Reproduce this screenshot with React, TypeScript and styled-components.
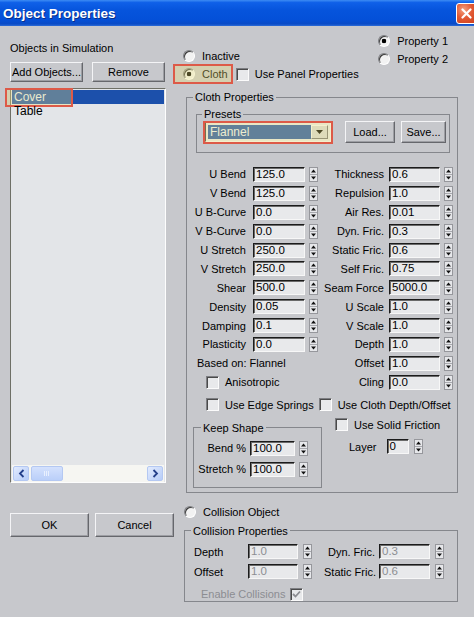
import React from 'react';
import styled, { createGlobalStyle } from 'styled-components';

const FONT = '"Liberation Sans", Arial, sans-serif';
const FACE = '#c7c8cc';

const GlobalStyle = createGlobalStyle`
  * { box-sizing: border-box; }
  html, body { margin: 0; padding: 0; background: ${FACE}; }
  body { font-family: ${FONT}; font-size: 11px; color: #000; }
`;

const Window = styled.div`
  width: 474px;
  height: 617px;
  overflow: hidden;
  display: flex;
  flex-direction: column;
  background: ${FACE};
`;

const TitleBar = styled.div`
  height: 26px;
  flex-shrink: 0;
  display: flex;
  align-items: center;
  justify-content: space-between;
  padding-left: 3px;
  background: linear-gradient(
    to bottom,
    #3d8cf4 0%,
    #0f60e8 10%,
    #0654dc 40%,
    #0450d8 75%,
    #0a4bc6 92%,
    #2c6cd8 100%
  );
  color: #fff;
  font-size: 13.5px;
  font-weight: bold;
  text-shadow: 1px 1px 0 #0b2f8a;
`;

const CloseButton = styled.div`
  width: 21px;
  height: 21px;
  margin-right: -3px;
  border: 1px solid #fff;
  border-radius: 3px;
  background: radial-gradient(circle at 35% 30%, #f4a080 0%, #e35a34 45%, #cc3e1c 100%);
  display: flex;
  align-items: center;
  justify-content: center;
`;

const Body = styled.div`
  flex: 1;
  display: flex;
  gap: 9px;
  padding-left: 10px;
`;

const LeftColumn = styled.div`
  width: 164px;
  display: flex;
  flex-direction: column;
  padding-top: 16px;
`;

const Caption = styled.div`
  height: 13px;
  line-height: 13px;
  white-space: nowrap;
`;

const ButtonRow = styled.div<{ $top: number; $gap: number }>`
  display: flex;
  gap: ${(p) => p.$gap}px;
  margin-top: ${(p) => p.$top}px;
`;

const PushButton = styled.div<{ $w: number; $h: number }>`
  width: ${(p) => p.$w}px;
  height: ${(p) => p.$h}px;
  flex-shrink: 0;
  display: flex;
  align-items: center;
  justify-content: center;
  border: 1px solid;
  border-color: #f4f4f6 #66676c #66676c #f4f4f6;
  box-shadow: inset -1px -1px 0 #9d9ea3;
  background: ${FACE};
  white-space: nowrap;
`;

const ListBox = styled.div`
  margin-top: 6px;
  width: 156px;
  height: 395px;
  display: flex;
  flex-direction: column;
  border: 1px solid;
  border-color: #6e6f66 #fdfdfd #fdfdfd #6e6f66;
  background: #e3e5e8;
  padding: 1px 1px 0 1px;
`;

const ListItem = styled.div<{ $selected?: boolean }>`
  position: relative;
  height: 14px;
  line-height: 14px;
  padding-left: 2px;
  font-size: 12px;
  background: ${(p) => (p.$selected ? '#1c50ab' : 'transparent')};
  color: ${(p) => (p.$selected ? '#e8eef8' : '#000')};
`;

const Annotation = styled.span<{ $l: number; $t: number; $r: number; $b: number }>`
  position: absolute;
  left: ${(p) => p.$l}px;
  top: ${(p) => p.$t}px;
  right: ${(p) => p.$r}px;
  bottom: ${(p) => p.$b}px;
  border: 2px solid #dd5a48;
  background: rgba(238, 226, 118, 0.32);
  pointer-events: none;
`;

const HScroll = styled.div`
  margin-top: auto;
  height: 17px;
  display: flex;
  align-items: center;
  padding: 0 1px;
  background: #f6f6f2;
`;

const ScrollArrow = styled.div`
  width: 16px;
  height: 15px;
  border: 1px solid #b4c8f2;
  border-radius: 2px;
  background: linear-gradient(to bottom right, #e2ebfe, #b6ccf8);
  display: flex;
  align-items: center;
  justify-content: center;
`;

const ScrollThumb = styled.div`
  width: 32px;
  height: 15px;
  margin: 0 auto 0 2px;
  border: 1px solid #b4c8f2;
  border-radius: 2px;
  background: linear-gradient(to bottom, #d4e1fd, #bacff9);
  display: flex;
  align-items: center;
  justify-content: center;
`;

const RightColumn = styled.div`
  width: 275px;
  display: flex;
  flex-direction: column;
`;

const ModeArea = styled.div`
  height: 64px;
  flex-shrink: 0;
  display: flex;
  justify-content: space-between;
`;

const ModeStack = styled.div<{ $top: number; $right?: number }>`
  display: flex;
  flex-direction: column;
  padding-top: ${(p) => p.$top}px;
  margin-right: ${(p) => p.$right ?? 0}px;
`;

const OptionRow = styled.div<{ $h?: number; $left?: number; $top?: number }>`
  height: ${(p) => p.$h ?? 18}px;
  margin-left: ${(p) => p.$left ?? 0}px;
  margin-top: ${(p) => p.$top ?? 0}px;
  display: flex;
  align-items: center;
  gap: 7px;
  white-space: nowrap;
`;

const Highlight = styled.div`
  position: relative;
  height: 18px;
  display: flex;
  align-items: center;
  gap: 7px;
`;

const Radio = styled.span<{ $checked?: boolean }>`
  width: 12px;
  height: 12px;
  flex-shrink: 0;
  border-radius: 50%;
  border: 1px solid;
  border-color: #7d7e82 #ffffff #ffffff #7d7e82;
  box-shadow: inset 1px 1px 0 #3a3a3a;
  background: ${(p) =>
    p.$checked ? 'radial-gradient(circle, #000 0 2px, #f2f2f2 2.6px)' : '#f2f2f2'};
`;

const CheckBox = styled.span<{ $gapLeft?: number; $gapRight?: number }>`
  width: 13px;
  height: 13px;
  flex-shrink: 0;
  margin-left: ${(p) => p.$gapLeft ?? 0}px;
  margin-right: ${(p) => p.$gapRight ?? 0}px;
  border: 1px solid;
  border-color: #7d7e82 #fbfbfb #fbfbfb #7d7e82;
  box-shadow: inset 1px 1px 0 #4a4a4a;
  background: #e8e9eb;
  display: flex;
  align-items: center;
  justify-content: center;
`;

const CheckLine = styled.div<{ $left?: number; $h?: number; $disabled?: boolean }>`
  height: ${(p) => p.$h ?? 18}px;
  margin-left: ${(p) => p.$left ?? 0}px;
  display: flex;
  align-items: center;
  white-space: nowrap;
  color: ${(p) => (p.$disabled ? '#8c8d92' : '#000')};
  & > ${CheckBox} + span {
    margin-left: 6px;
  }
`;

const Group = styled.fieldset<{ $l?: number; $t?: number; $pl: number; $pr?: number; $pt?: number; $pb?: number; $w?: number }>`
  margin: ${(p) => p.$t ?? 0}px 0 0 ${(p) => p.$l ?? 0}px;
  min-width: 0;
  ${(p) => (p.$w ? `width: ${p.$w}px; flex-shrink: 0;` : '')}
  border: 1px solid #85878c;
  padding: ${(p) => p.$pt ?? 0}px ${(p) => p.$pr ?? 0}px ${(p) => p.$pb ?? 0}px ${(p) => p.$pl}px;
`;

const GroupTitle = styled.legend<{ $indent: number }>`
  margin-left: ${(p) => p.$indent}px;
  padding: 0 2px;
  line-height: 14px;
  white-space: nowrap;
`;

const PresetsRow = styled.div`
  height: 22px;
  display: flex;
  align-items: center;
`;

const Combo = styled.div`
  position: relative;
  width: 126px;
  height: 20px;
  margin-right: 14px;
  display: flex;
  padding: 2px;
  border: 1px solid;
  border-color: #3c3c3c #f5f5f5 #f5f5f5 #3c3c3c;
  background: #e8e9eb;
`;

const ComboValue = styled.div`
  flex: 1;
  padding-left: 2px;
  background: #1f52aa;
  color: #eef2fa;
  font-size: 12px;
  line-height: 14px;
`;

const ComboArrow = styled.div`
  width: 17px;
  display: flex;
  align-items: center;
  justify-content: center;
  border: 1px solid;
  border-color: #f6f6f6 #707176 #707176 #f6f6f6;
  background: #d6d7da;
`;

const FieldColumns = styled.div`
  display: flex;
  gap: 6px;
  margin-top: 12px;
`;

const SpinGrid = styled.div<{ $cols: string; $gap: number; $row: number; $left?: number }>`
  display: grid;
  grid-template-columns: ${(p) => p.$cols};
  column-gap: ${(p) => p.$gap}px;
  grid-auto-rows: ${(p) => p.$row}px;
  align-items: center;
  margin-left: ${(p) => p.$left ?? 0}px;
`;

const FieldLabel = styled.div<{ $align?: 'left' | 'right'; $disabled?: boolean }>`
  text-align: ${(p) => p.$align ?? 'right'};
  white-space: nowrap;
  line-height: 14px;
  color: ${(p) => (p.$disabled ? '#000' : '#000')};
`;

const WideCell = styled.div<{ $pad?: number }>`
  grid-column: 1 / -1;
  padding-left: ${(p) => p.$pad ?? 0}px;
  white-space: nowrap;
  display: flex;
  align-items: center;
`;

const SpinBox = styled.div<{ $gap: number }>`
  display: flex;
  align-items: center;
  gap: ${(p) => p.$gap}px;
`;

const ValueBox = styled.div<{ $w: number; $disabled?: boolean }>`
  width: ${(p) => p.$w}px;
  height: 15px;
  flex-shrink: 0;
  padding-left: 2px;
  border: 1px solid;
  border-color: #1b1b1b #f7f7f7 #f7f7f7 #1b1b1b;
  box-shadow: inset 1px 1px 0 #6a6a6a;
  background: #e8e9eb;
  font-size: 11.5px;
  line-height: 13px;
  white-space: nowrap;
  overflow: hidden;
  color: ${(p) => (p.$disabled ? '#8d8e92' : '#000')};
`;

const BottomSection = styled.div`
  display: flex;
  align-items: flex-start;
`;

const SideOptions = styled.div`
  margin-left: 13px;
  padding-top: 3px;
  display: flex;
  flex-direction: column;
`;

const LayerRow = styled.div`
  height: 16px;
  margin: 6px 0 0 14px;
  display: flex;
  align-items: center;
  gap: 10px;
`;

const DisabledLine = styled.div`
  height: 13px;
  margin: 6px 0 0 7px;
  display: flex;
  align-items: center;
  gap: 5px;
  color: #8c8d92;
  white-space: nowrap;
`;

const Spinner: React.FC = () => (
  <svg width="9" height="15" viewBox="0 0 9 15">
    <rect x="0.5" y="0.5" width="8" height="14" fill="#e6e7ea" stroke="#96979c" />
    <line x1="1" y1="7.5" x2="8" y2="7.5" stroke="#a8a9ae" />
    <path d="M4.5 2.5 L7 5.5 H2 Z" fill="#111" />
    <path d="M2 9.5 H7 L4.5 12.5 Z" fill="#111" />
  </svg>
);

const Field: React.FC<{ value: string; w: number; gap?: number; disabled?: boolean }> = ({
  value,
  w,
  gap = 4,
  disabled,
}) => (
  <SpinBox $gap={gap}>
    <ValueBox $w={w} $disabled={disabled}>
      {value}
    </ValueBox>
    <Spinner />
  </SpinBox>
);

const Check: React.FC<{ checked?: boolean; disabled?: boolean }> = ({ checked, disabled }) => (
  <CheckBox>
    {checked && (
      <svg width="9" height="9" viewBox="0 0 9 9">
        <path d="M1 4 L3.5 6.5 L8 1.5" fill="none" stroke={disabled ? '#8c8d92' : '#000'} strokeWidth="1.8" />
      </svg>
    )}
  </CheckBox>
);

const leftFields: [string, string][] = [
  ['U Bend', '125.0'],
  ['V Bend', '125.0'],
  ['U B-Curve', '0.0'],
  ['V B-Curve', '0.0'],
  ['U Stretch', '250.0'],
  ['V Stretch', '250.0'],
  ['Shear', '500.0'],
  ['Density', '0.05'],
  ['Damping', '0.1'],
  ['Plasticity', '0.0'],
];

const rightFields: [string, string][] = [
  ['Thickness', '0.6'],
  ['Repulsion', '1.0'],
  ['Air Res.', '0.01'],
  ['Dyn. Fric.', '0.3'],
  ['Static Fric.', '0.6'],
  ['Self Fric.', '0.75'],
  ['Seam Force', '5000.0'],
  ['U Scale', '1.0'],
  ['V Scale', '1.0'],
  ['Depth', '1.0'],
  ['Offset', '1.0'],
  ['Cling', '0.0'],
];

export default function App() {
  return (
    <>
      <GlobalStyle />
      <Window>
        <TitleBar>
          <span>Object Properties</span>
          <CloseButton>
            <svg width="11" height="11" viewBox="0 0 11 11">
              <path d="M1.5 1.5 L9.5 9.5 M9.5 1.5 L1.5 9.5" stroke="#fff" strokeWidth="2.2" strokeLinecap="round" />
            </svg>
          </CloseButton>
        </TitleBar>

        <Body>
          <LeftColumn>
            <Caption>Objects in Simulation</Caption>
            <ButtonRow $top={7} $gap={9}>
              <PushButton $w={73} $h={20}>Add Objects...</PushButton>
              <PushButton $w={73} $h={20}>Remove</PushButton>
            </ButtonRow>
            <ListBox>
              <ListItem $selected>
                Cover
                <Annotation $l={-7} $t={-2} $r={91} $b={-3} />
              </ListItem>
              <ListItem>Table</ListItem>
              <HScroll>
                <ScrollArrow>
                  <svg width="7" height="9" viewBox="0 0 7 9">
                    <path d="M5.5 1 L2 4.5 L5.5 8" fill="none" stroke="#243f8a" strokeWidth="1.8" />
                  </svg>
                </ScrollArrow>
                <ScrollThumb>
                  <svg width="8" height="7" viewBox="0 0 8 7">
                    <path d="M1.5 1 V6 M3.5 1 V6 M5.5 1 V6" stroke="#e9f0fe" strokeWidth="1" />
                  </svg>
                </ScrollThumb>
                <ScrollArrow>
                  <svg width="7" height="9" viewBox="0 0 7 9">
                    <path d="M1.5 1 L5 4.5 L1.5 8" fill="none" stroke="#243f8a" strokeWidth="1.8" />
                  </svg>
                </ScrollArrow>
              </HScroll>
            </ListBox>
            <ButtonRow $top={30} $gap={6}>
              <PushButton $w={79} $h={24}>OK</PushButton>
              <PushButton $w={79} $h={24}>Cancel</PushButton>
            </ButtonRow>
          </LeftColumn>

          <RightColumn>
            <ModeArea>
              <ModeStack $top={21}>
                <OptionRow>
                  <Radio />
                  <span>Inactive</span>
                </OptionRow>
                <OptionRow>
                  <Highlight>
                    <Radio $checked />
                    <span>Cloth</span>
                    <Annotation $l={-10} $t={-1} $r={-5} $b={-1} />
                  </Highlight>
                  <CheckLine>
                    <CheckBox $gapLeft={1} />
                    <span>Use Panel Properties</span>
                  </CheckLine>
                </OptionRow>
              </ModeStack>
              <ModeStack $top={6} $right={10}>
                <OptionRow>
                  <Radio $checked />
                  <span>Property 1</span>
                </OptionRow>
                <OptionRow>
                  <Radio />
                  <span>Property 2</span>
                </OptionRow>
              </ModeStack>
            </ModeArea>

            <Group $l={3} $pl={6} $pr={7} $pb={4}>
              <GroupTitle $indent={0}>Cloth Properties</GroupTitle>

              <Group $l={3} $t={3} $pl={8} $pb={9}>
                <GroupTitle $indent={-3}>Presets</GroupTitle>
                <PresetsRow>
                  <Combo>
                    <ComboValue>Flannel</ComboValue>
                    <ComboArrow>
                      <svg width="7" height="4" viewBox="0 0 7 4">
                        <path d="M0 0 H7 L3.5 4 Z" fill="#000" />
                      </svg>
                    </ComboArrow>
                    <Annotation $l={-3} $t={-2} $r={-3} $b={-3} />
                  </Combo>
                  <PushButton $w={50} $h={22}>Load...</PushButton>
                  <PushButton $w={45} $h={22} style={{ marginLeft: 6 }}>
                    Save...
                  </PushButton>
                </PresetsRow>
              </Group>

              <FieldColumns>
                <SpinGrid $cols="53px auto" $gap={7} $row={18.9}>
                  {leftFields.map(([label, value]) => (
                    <React.Fragment key={label}>
                      <FieldLabel>{label}</FieldLabel>
                      <Field value={value} w={52} />
                    </React.Fragment>
                  ))}
                  <WideCell $pad={4}>Based on: Flannel</WideCell>
                  <WideCell>
                    <CheckLine $left={13}>
                      <Check />
                      <span>Anisotropic</span>
                    </CheckLine>
                  </WideCell>
                </SpinGrid>
                <SpinGrid $cols="60px auto" $gap={5} $row={18.9}>
                  {rightFields.map(([label, value]) => (
                    <React.Fragment key={label}>
                      <FieldLabel>{label}</FieldLabel>
                      <Field value={value} w={51} />
                    </React.Fragment>
                  ))}
                </SpinGrid>
              </FieldColumns>

              <OptionRow $top={4} $left={13} style={{ gap: 0 }}>
                <CheckLine>
                  <Check />
                  <span>Use Edge Springs</span>
                </CheckLine>
                <CheckLine $left={5}>
                  <Check />
                  <span>Use Cloth Depth/Offset</span>
                </CheckLine>
              </OptionRow>

              <BottomSection>
                <Group $t={7} $w={129} $pl={3} $pt={3} $pb={7}>
                  <GroupTitle $indent={4}>Keep Shape</GroupTitle>
                  <SpinGrid $cols="49px auto" $gap={4} $row={21}>
                    <FieldLabel>Bend %</FieldLabel>
                    <Field value="100.0" w={45} />
                    <FieldLabel>Stretch %</FieldLabel>
                    <Field value="100.0" w={45} />
                  </SpinGrid>
                </Group>
                <SideOptions>
                  <CheckLine $h={16}>
                    <Check />
                    <span>Use Solid Friction</span>
                  </CheckLine>
                  <LayerRow>
                    <span>Layer</span>
                    <Field value="0" w={22} gap={5} />
                  </LayerRow>
                </SideOptions>
              </BottomSection>
            </Group>

            <OptionRow $top={10} $left={1}>
              <Radio />
              <span>Collision Object</span>
            </OptionRow>

            <Group $l={1} $t={3} $pl={9} $pt={4}>
              <GroupTitle $indent={-3}>Collision Properties</GroupTitle>
              <SpinGrid $cols="50px 72px 51px auto" $gap={4} $row={20}>
                <FieldLabel $align="left">Depth</FieldLabel>
                <Field value="1.0" w={50} gap={5} disabled />
                <FieldLabel>Dyn. Fric.</FieldLabel>
                <Field value="0.3" w={51} gap={5} disabled />
                <FieldLabel $align="left">Offset</FieldLabel>
                <Field value="1.0" w={50} gap={5} disabled />
                <FieldLabel>Static Fric.</FieldLabel>
                <Field value="0.6" w={51} gap={5} disabled />
              </SpinGrid>
              <DisabledLine>
                <span>Enable Collisions</span>
                <Check checked disabled />
              </DisabledLine>
            </Group>
          </RightColumn>
        </Body>
      </Window>
    </>
  );
}
